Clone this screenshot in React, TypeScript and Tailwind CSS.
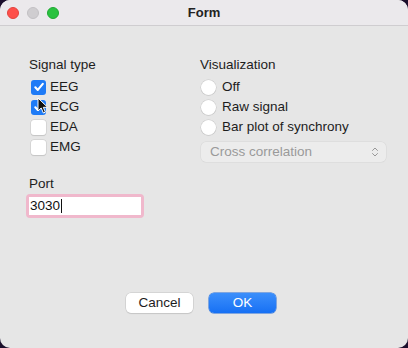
import { ChevronsUpDown } from "lucide-react";

const signals = [
  { label: "EEG", checked: true },
  { label: "ECG", checked: true },
  { label: "EDA", checked: false },
  { label: "EMG", checked: false },
];
const modes = ["Off", "Raw signal", "Bar plot of synchrony"];

const Check = ({ on }: { on: boolean }) =>
  on ? (
    <span className="w-[15px] h-[15px] rounded-[3px] bg-[#1f7bf6] flex items-center justify-center">
      <svg width="12" height="12" viewBox="0 0 12 12" fill="none">
        <path d="M2.3 6.3l2.5 2.6L9.8 2.8" stroke="white" strokeWidth="2.1" strokeLinecap="round" strokeLinejoin="round" />
      </svg>
    </span>
  ) : (
    <span className="w-[15px] h-[15px] rounded-[3px] bg-white shadow-[0_0_0_0.5px_#c8c8c8,0_0.5px_1px_rgba(0,0,0,0.15)]" />
  );

export default function App() {
  return (
    <div className="w-[408px] h-[348px] bg-[#1b0f2c] font-['Liberation_Sans',sans-serif] text-[13.5px] text-[#1d1d1d]">
      <div className="relative w-full h-full rounded-[10px] overflow-hidden bg-[#e6e6e6] flex flex-col">
        <div className="h-[26px] bg-[#ebe9ec] border-b border-[#cfcdd0] flex items-center relative shrink-0">
          <div className="flex gap-[8px] pl-[7px]">
            <span className="w-[12px] h-[12px] rounded-full bg-[#fe4f4a] border border-[#e2433e]" />
            <span className="w-[12px] h-[12px] rounded-full bg-[#cfcdd0] border border-[#c2c0c3]" />
            <span className="w-[12px] h-[12px] rounded-full bg-[#29c23f] border border-[#1fa833]" />
          </div>
          <div className="absolute inset-0 flex items-center justify-center font-bold text-[13px] text-[#222]">Form</div>
        </div>

        <div className="flex pt-[31px] pl-[29px]">
          <div className="w-[171px]">
            <div className="leading-[16px]">Signal type</div>
            <div className="mt-[4px] flex flex-col">
              {signals.map((s) => (
                <div key={s.label} className="h-[20px] flex items-center gap-[4px] pl-[2px]">
                  <Check on={s.checked} />
                  <span>{s.label}</span>
                </div>
              ))}
            </div>
          </div>
          <div className="w-[186px]">
            <div className="leading-[16px]">Visualization</div>
            <div className="mt-[4px] flex flex-col">
              {modes.map((m) => (
                <div key={m} className="h-[20px] flex items-center gap-[6px] pl-[1px]">
                  <span className="w-[15px] h-[15px] rounded-full bg-white shadow-[0_0_0_0.5px_#c8c8c8,0_0.5px_1px_rgba(0,0,0,0.15)]" />
                  <span>{m}</span>
                </div>
              ))}
            </div>
            <div className="mt-[5px] ml-[1px] h-[20px] rounded-[5px] bg-[#ececec] shadow-[0_0_0_0.5px_#d6d6d6] flex items-center justify-between pl-[9px] pr-[5px] text-[#9a9a9a]">
              <span>Cross correlation</span>
              <ChevronsUpDown size={12} strokeWidth={1.8} className="text-[#8e8e8e]" />
            </div>
          </div>
        </div>

        <div className="pl-[29px] mt-[14px] leading-[16px]">Port</div>
        <div className="pl-[26px] mt-[2px]">
          <div className="w-[118px] h-[24px] rounded-[4px] bg-[#f0b8cc] p-[3px]">
            <div className="h-full bg-white flex items-center pl-[1px] text-[#111]">
              3030<span className="w-px h-[14px] bg-[#111] ml-[1px]" />
            </div>
          </div>
        </div>

        <div className="flex justify-center gap-[16px] mt-[75px] pr-[6px]">
          <button className="w-[67px] h-[20px] rounded-[5px] bg-white shadow-[0_0_0_0.5px_#c4c4c4,0_1px_1px_rgba(0,0,0,0.12)] text-[#1d1d1d]">Cancel</button>
          <button className="w-[67px] h-[20px] rounded-[5px] bg-gradient-to-b from-[#3b8ffb] to-[#1670f4] shadow-[0_0_0_0.5px_#1a66d8] text-white">OK</button>
        </div>

        <svg className="absolute left-[37px] top-[97px]" width="12" height="18" viewBox="0 0 12 18">
          <path d="M1 1v13l3.2-3 2.2 5 2-0.9-2.1-4.8h4.3z" fill="#111" stroke="white" strokeWidth="1" strokeLinejoin="round" />
        </svg>
      </div>
    </div>
  );
}
